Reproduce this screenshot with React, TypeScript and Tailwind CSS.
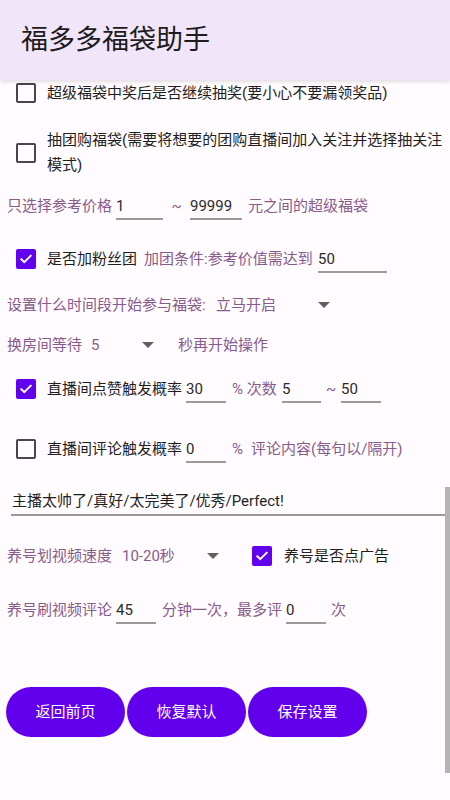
import React from "react";

const font = { fontFamily: '"Roboto", "Noto Sans CJK SC", "Noto Sans", sans-serif' };

const Check = ({ checked }: { checked?: boolean }) =>
  checked ? (
    <div className="flex h-[20px] w-[20px] shrink-0 items-center justify-center rounded-[2px] bg-[#6200ee]">
      <svg width="14" height="14" viewBox="0 0 24 24" fill="none">
        <path d="M4 12.5l5 5L20 6.5" stroke="#fff" strokeWidth="3.4" strokeLinecap="square" />
      </svg>
    </div>
  ) : (
    <div className="h-[20px] w-[20px] shrink-0 rounded-[2px] border-[2.5px] border-[#49454f]" />
  );

const Field = ({ value, w }: { value: string; w: string }) => (
  <div className={`${w} flex h-[28px] shrink-0 items-center border-b-2 border-[#9a9a9a] pt-[2px] text-[15px] text-[#2a2a2a]`}>
    {value}
  </div>
);

const Arrow = () => (
  <svg width="12" height="6" viewBox="0 0 12 6" className="shrink-0">
    <path d="M0 0h12L6 6z" fill="#5f5f5f" />
  </svg>
);

const Label = ({ children, className = "" }: { children: React.ReactNode; className?: string }) => (
  <span className={`shrink-0 text-[15px] text-[#875c8c] ${className}`}>{children}</span>
);

const Dark = ({ children, className = "" }: { children: React.ReactNode; className?: string }) => (
  <span className={`shrink-0 text-[15px] text-[#1f1f1f] ${className}`}>{children}</span>
);

export default function App() {
  return (
    <div className="relative h-[800px] w-[450px] overflow-hidden bg-[#fffbfe]" style={font}>
      <div className="relative z-10 flex h-[80px] items-center bg-[#f1e6f9] pl-[21px] shadow-[0_2px_4px_rgba(0,0,0,0.12)]">
        <span className="text-[27px] text-[#1d1b20]">福多多福袋助手</span>
      </div>

      <div className="mt-[1px] flex h-[24px] items-center pl-[16px]">
        <Check />
        <Dark className="ml-[11px]">超级福袋中奖后是否继续抽奖(要小心不要漏领奖品)</Dark>
      </div>

      <div className="mt-[24px] flex h-[48px] items-center pl-[16px]">
        <Check />
        <span className="ml-[11px] text-[15px] leading-[25px] text-[#1f1f1f]">
          抽团购福袋(需要将想要的团购直播间加入关注并选择抽关注模式)
        </span>
      </div>

      <div className="mt-[14px] flex h-[30px] items-center pl-[7px]">
        <Label className="w-[109px]">只选择参考价格</Label>
        <Field value="1" w="w-[47px]" />
        <Label className="w-[27px] text-center">~</Label>
        <Field value="99999" w="w-[52px]" />
        <Label className="ml-[6px]">元之间的超级福袋</Label>
      </div>

      <div className="mt-[23px] flex h-[30px] items-center pl-[16px]">
        <Check checked />
        <Dark className="ml-[11px] w-[97px]">是否加粉丝团</Dark>
        <Label className="w-[174px]">加团条件:参考价值需达到</Label>
        <Field value="50" w="w-[69px]" />
      </div>

      <div className="mt-[16px] flex h-[30px] items-center pl-[7px]">
        <Label className="w-[209px]">设置什么时间段开始参与福袋:</Label>
        <div className="flex w-[120px] items-center justify-between pr-[6px]">
          <Label>立马开启</Label>
          <Arrow />
        </div>
      </div>

      <div className="mt-[10px] flex h-[30px] items-center pl-[7px]">
        <Label className="w-[84px]">换房间等待</Label>
        <div className="flex w-[69px] items-center justify-between pr-[6px]">
          <Label>5</Label>
          <Arrow />
        </div>
        <Label className="ml-[18px]">秒再开始操作</Label>
      </div>

      <div className="mt-[14px] flex h-[30px] items-center pl-[16px]">
        <Check checked />
        <Dark className="ml-[11px] w-[139px]">直播间点赞触发概率</Dark>
        <Field value="30" w="w-[40px]" />
        <Label className="w-[56px] pl-[6px]">% 次数</Label>
        <Field value="5" w="w-[39px]" />
        <Label className="w-[20px] text-center">~</Label>
        <Field value="50" w="w-[40px]" />
      </div>

      <div className="mt-[30px] flex h-[30px] items-center pl-[16px]">
        <Check />
        <Dark className="ml-[11px] w-[139px]">直播间评论触发概率</Dark>
        <Field value="0" w="w-[40px]" />
        <Label className="pl-[6px]">%</Label>
        <Label className="ml-[8px]">评论内容(每句以/隔开)</Label>
      </div>

      <div className="ml-[11px] mt-[24px] flex h-[28px] items-center border-b-2 border-[#9a9a9a] pl-[1px] text-[15px] text-[#1f1f1f]">
        主播太帅了/真好/太完美了/优秀/Perfect!
      </div>

      <div className="mt-[25px] flex h-[30px] items-center pl-[7px]">
        <Label className="w-[115px]">养号划视频速度</Label>
        <div className="flex w-[104px] items-center justify-between pr-[7px]">
          <Label>10-20秒</Label>
          <Arrow />
        </div>
        <div className="ml-[26px]">
          <Check checked />
        </div>
        <Dark className="ml-[12px]">养号是否点广告</Dark>
      </div>

      <div className="mt-[24px] flex h-[30px] items-center pl-[7px]">
        <Label className="w-[109px]">养号刷视频评论</Label>
        <Field value="45" w="w-[40px]" />
        <Label className="w-[130px] pl-[6px]">分钟一次，最多评</Label>
        <Field value="0" w="w-[40px]" />
        <Label className="pl-[5px]">次</Label>
      </div>

      <div className="mt-[62px] flex gap-[2px] pl-[6px]">
        {["返回前页", "恢复默认", "保存设置"].map((t) => (
          <button
            key={t}
            className="flex h-[50px] w-[119px] items-center justify-center rounded-full bg-[#6200ee] text-[15px] text-white"
          >
            {t}
          </button>
        ))}
      </div>

      <div className="absolute left-[445px] top-[487px] h-[286px] w-[5px] bg-[#b4b4b4]" />
    </div>
  );
}
